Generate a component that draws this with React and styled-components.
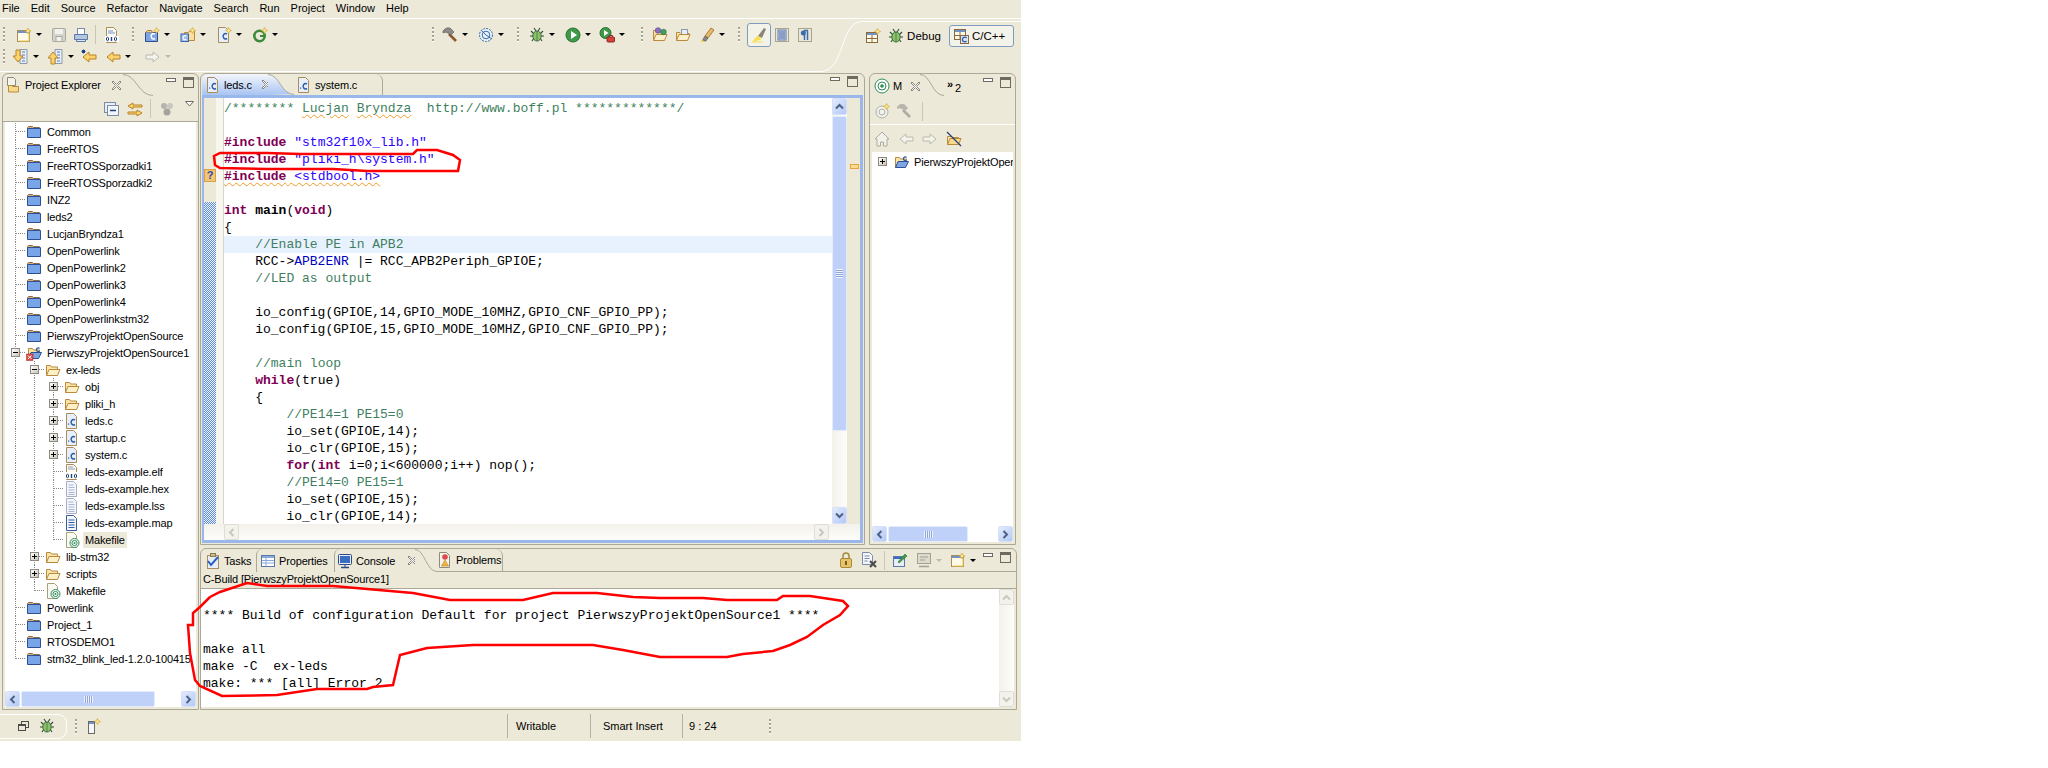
import React from "react";
import styled, { createGlobalStyle } from "styled-components";

const GlobalStyle = createGlobalStyle`
  html, body { margin: 0; background: #fff; }
  body { font-family: "Liberation Sans", Arial, sans-serif; font-size: 11px; color: #000; }
  * { box-sizing: border-box; }
`;

const BEIGE = "#ece9d8";
const LINE = "#aca899";

const Page = styled.div`
  position: relative;
  width: 1021px;
  height: 741px;
  background: ${BEIGE};
  display: flex;
  flex-direction: column;
  overflow: hidden;
`;

const MenuBar = styled.div`
  height: 19px;
  display: flex;
  gap: 11px;
  padding: 2px 0 0 2px;
  border-bottom: 1px solid #fff;
  font-size: 11px;
`;

const CoolBar = styled.div`
  position: relative;
  height: 53px;
  padding-top: 5px;
`;

const CoolCurve = styled.svg`
  position: absolute;
  left: 0;
  top: 0;
`;

const ToolRow = styled.div`
  position: relative;
  height: 22px;
  display: flex;
  align-items: center;
`;

const Tool = styled.div`
  flex: none;
  width: ${(p) => p.$w || 22}px;
  height: 22px;
  margin-left: ${(p) => p.$ml || 0}px;
  display: flex;
  align-items: center;
  justify-content: center;
`;

const CheckedTool = styled(Tool)`
  width: 24px;
  height: 24px;
  background: #f4f3ea;
  border: 1px solid #7e9cc0;
  border-radius: 3px;
`;

const DropBox = styled.div`
  flex: none;
  width: 14px;
  display: flex;
  padding-left: 1px;
  align-self: center;
`;

const Tri = styled.i`
  display: block;
  width: 0;
  height: 0;
  border-left: 3.5px solid transparent;
  border-right: 3.5px solid transparent;
  border-top: 3.5px solid ${(p) => (p.$off ? "#bdbbae" : "#000")};
`;

const Grip = styled.div`
  flex: none;
  width: 2px;
  height: 15px;
  margin-left: ${(p) => p.$ml || 0}px;
  margin-right: ${(p) => p.$mr || 0}px;
  background: repeating-linear-gradient(to bottom, #a5a294 0 2px, #fff 2px 3px, transparent 3px 4px);
`;

const Sep = styled.div`
  flex: none;
  width: 1px;
  height: 19px;
  align-self: center;
  margin-left: ${(p) => p.$ml || 0}px;
  margin-right: ${(p) => p.$mr || 0}px;
  background: #c9c6b4;
`;

const PerspLabel = styled.span`
  font-size: 11.5px;
  margin-left: 3px;
  white-space: nowrap;
`;

const PerspBox = styled.div`
  flex: none;
  width: 65px;
  height: 22px;
  margin: 3px 0 0 8px;
  display: flex;
  align-items: center;
  padding-left: 3px;
  background: #f4f3ea;
  border: 1px solid #7e9cc0;
  border-radius: 3px;
  font-size: 12px;
`;

const PerspPlain = styled.div`
  flex: none;
  display: flex;
  align-items: center;
  margin: 3px 0 0 ${(p) => p.$ml || 0}px;
`;

const Workbench = styled.div`
  display: flex;
  gap: 1px;
  height: 637px;
  margin-top: 2px;
  padding-left: 2px;
`;

const LeftPanel = styled.div`
  flex: none;
  width: 197px;
  display: flex;
  flex-direction: column;
  border: 1px solid ${LINE};
  border-radius: 6px 6px 0 0;
`;

const RightCol = styled.div`
  flex: none;
  width: 817px;
  display: flex;
  flex-direction: column;
  gap: 3px;
`;

const TopRow = styled.div`
  display: flex;
  gap: 4px;
  height: 472px;
`;

const EditorPanel = styled.div`
  flex: none;
  width: 665px;
  display: flex;
  flex-direction: column;
  border: 1px solid ${LINE};
  border-radius: 6px 6px 0 0;
  padding: 0 1px 1px 1px;
`;

const OutlinePanel = styled.div`
  flex: none;
  width: 147px;
  display: flex;
  flex-direction: column;
  border: 1px solid ${LINE};
  border-radius: 6px 6px 0 0;
`;

const ConsolePanel = styled.div`
  height: 162px;
  display: flex;
  flex-direction: column;
  border: 1px solid ${LINE};
  border-radius: 6px 6px 0 0;
`;

const TabStrip = styled.div`
  flex: none;
  height: ${(p) => p.$h || 23}px;
  display: flex;
  align-items: stretch;
  border-bottom: ${(p) => (p.$blue ? "3px solid #9ab7ec" : "0")};
`;

const TabRest = styled.div`
  flex: 1;
  min-width: 0;
  display: flex;
  align-items: stretch;
  border-bottom: 1px solid ${LINE};
`;

const Tab = styled.div`
  flex: none;
  display: flex;
  align-items: center;
  gap: 3px;
  width: ${(p) => p.$w}px;
  padding-left: ${(p) => p.$pl || 0}px;
  font-size: 11px;
  letter-spacing: -0.15px;
  white-space: nowrap;
  background: ${(p) => (p.$blue ? "linear-gradient(to bottom, #f4f6fb, #a8c4f2)" : "transparent")};
  border-left: ${(p) => (p.$left ? `1px solid ${LINE}` : "0")};
  border-right: ${(p) => (p.$edge ? `1px solid ${LINE}` : "0")};
  border-radius: ${(p) => (p.$edge ? "0 7px 0 0" : "6px 0 0 0")};
`;

const CloseMark = styled.span`
  flex: none;
  margin-left: ${(p) => p.$ml || 6}px;
  display: flex;
`;

const CurveBox = styled.svg`
  flex: none;
  display: block;
`;

const Fill = styled.div`
  flex: 1;
`;

const MinMax = styled.div`
  flex: none;
  display: flex;
  gap: 7px;
  align-items: flex-start;
  padding: ${(p) => p.$t || 3}px ${(p) => p.$r || 4}px 0 0;
`;

const MinBtn = styled.i`
  display: block;
  width: 10px;
  height: 4px;
  margin-top: 1px;
  background: #fff;
  border: 1px solid #6d6b5f;
`;

const MaxBtn = styled.i`
  display: block;
  width: 11px;
  height: 11px;
  background: linear-gradient(#6d6b5f 0 2px, ${BEIGE} 2px);
  border: 1px solid #6d6b5f;
`;

const ViewBar = styled.div`
  flex: none;
  height: ${(p) => p.$h || 26}px;
  display: flex;
  align-items: center;
  padding-left: ${(p) => p.$pl || 0}px;
  border-bottom: ${(p) => (p.$line ? `1px solid ${p.$line}` : "0")};
`;

const ViewMenu = styled.svg`
  margin-bottom: 10px;
`;

const TreeWrap = styled.div`
  flex: 1;
  min-height: 0;
  margin: 0 2px 2px 2px;
  background: #fff;
  display: flex;
  flex-direction: column;
`;

const Tree = styled.div`
  flex: 1;
  padding: 1px 0 0 1px;
  overflow: hidden;
`;

const TreeRow = styled.div`
  height: 17px;
  display: flex;
  align-items: center;
  white-space: nowrap;
  font-size: 11px;
  letter-spacing: -0.15px;
`;

const Cell = styled.div`
  position: relative;
  flex: none;
  width: 19px;
  height: 17px;

  &::before {
    content: "";
    display: ${(p) => (p.$kind === "none" ? "none" : "block")};
    position: absolute;
    left: 9px;
    top: 0;
    height: ${(p) => (p.$kind === "last" ? 9 : 17)}px;
    border-left: 1px dotted #8c8a80;
  }

  &::after {
    content: "";
    display: ${(p) => (p.$kind === "none" || p.$kind === "line" ? "none" : "block")};
    position: absolute;
    left: 10px;
    top: 8px;
    width: 9px;
    border-top: 1px dotted #8c8a80;
  }
`;

const Expander = styled.i`
  position: absolute;
  z-index: 1;
  left: 5px;
  top: 4px;
  width: 9px;
  height: 9px;
  background: linear-gradient(135deg, #fff, #c9c6b8);
  border: 1px solid #8c8a80;

  &::before {
    content: "";
    position: absolute;
    left: 1px;
    top: 3px;
    width: 5px;
    height: 1px;
    background: #000;
  }

  &::after {
    content: "";
    display: ${(p) => (p.$open ? "none" : "block")};
    position: absolute;
    left: 3px;
    top: 1px;
    width: 1px;
    height: 5px;
    background: #000;
  }
`;

const TreeIcon = styled.span`
  flex: none;
  display: flex;
  margin: 0 ${(p) => (p.$sel ? 3 : 5)}px 0 1px;
`;

const TreeText = styled.span`
  padding: ${(p) => (p.$sel ? "2px 2px" : "0")};
  background: ${(p) => (p.$sel ? BEIGE : "transparent")};
`;

const EditorBody = styled.div`
  flex: 1;
  min-height: 0;
  display: flex;
  flex-direction: column;
  background: #fff;
  border-left: 2px solid #9ab7ec;
  border-right: 3px solid #9ab7ec;
  border-bottom: 3px solid #9ab7ec;
`;

const EditorMain = styled.div`
  flex: 1;
  min-height: 0;
  display: flex;
`;

const Gutter = styled.div`
  flex: none;
  width: 12px;
  display: flex;
  flex-direction: column;
  background: ${BEIGE};
`;

const GutterTop = styled.div`
  flex: none;
  height: 104px;
  padding-top: 71px;
`;

const QuickFix = styled.div`
  width: 12px;
  height: 13px;
  background: #f4c573;
  border: 1px solid #d9a04a;
  color: #2a4aa8;
  font-weight: bold;
  font-size: 11px;
  line-height: 11px;
  text-align: center;
`;

const Dither = styled.div`
  flex: 1;
  background: repeating-conic-gradient(#5c8ce0 0 25%, #eef3fc 0 50%) 0 0 / 2px 2px;
`;

const FoldCol = styled.div`
  flex: none;
  width: 8px;
  background: #f7f6ef;
  border-right: 1px solid #d8d6c8;
`;

const Code = styled.div`
  flex: 1;
  min-width: 0;
  padding-top: 2px;
  overflow: hidden;
  font-family: "Liberation Mono", "Courier New", monospace;
  font-size: 13px;
`;

const Line = styled.div`
  height: 17px;
  line-height: 17px;
  white-space: pre;
  background: ${(p) => (p.$hl ? "#e8f2fe" : "transparent")};
`;

const Kw = styled.b`
  color: #7f0055;
`;
const Str = styled.span`
  color: #2a00ff;
`;
const Com = styled.span`
  color: #3f7f5f;
`;
const Fld = styled.span`
  color: #0000c0;
`;
const Squig = styled.span`
  text-decoration: underline wavy #f59a23 1px;
  text-underline-offset: 2px;
`;

const Ruler = styled.div`
  flex: none;
  width: 13px;
  padding: 66px 0 0 3px;
  background: ${BEIGE};
`;

const RulerMark = styled.div`
  width: 9px;
  height: 5px;
  background: #fbdc8c;
  border: 1px solid #e8a33c;
`;

const VTrack = styled.div`
  flex: none;
  width: 15px;
  display: flex;
  flex-direction: column;
  background: linear-gradient(to right, #f3f1ea, #fdfdfb);
`;

const HTrack = styled.div`
  flex: none;
  height: 16px;
  display: flex;
  padding-left: ${(p) => p.$pl || 0}px;
  padding-right: ${(p) => p.$pr || 0}px;
  background: ${(p) => (p.$white ? "#fff" : "linear-gradient(to bottom, #f3f1ea, #fdfdfb)")};
`;

const ScrollBtn = styled.div`
  flex: none;
  width: ${(p) => p.$w || 15}px;
  height: ${(p) => p.$h || 16}px;
  display: flex;
  align-items: center;
  justify-content: center;
  border-radius: 2px;
  background: ${(p) => (p.$off ? "#f3f2ec" : "linear-gradient(135deg, #e3ebfd, #b4c9f7)")};
  border: 1px solid ${(p) => (p.$off ? "#dfded4" : "#d4e0f8")};
`;

const Thumb = styled.div`
  flex: ${(p) => (p.$w ? "none" : 1)};
  width: ${(p) => (p.$w ? `${p.$w}px` : "auto")};
  display: flex;
  align-items: center;
  justify-content: center;
  background: #bfd1f8;
  border: 1px solid #e4ecfc;
  border-radius: 2px;
  margin: ${(p) => (p.$v ? "1px 0" : "0 1px")};
`;

const GripLines = styled.i`
  display: block;
  width: ${(p) => (p.$v ? 7 : 9)}px;
  height: ${(p) => (p.$v ? 9 : 7)}px;
  background: ${(p) =>
    p.$v
      ? "repeating-linear-gradient(to bottom, #eef3fd 0 1px, #8fa7d8 1px 2px)"
      : "repeating-linear-gradient(to right, #eef3fd 0 1px, #8fa7d8 1px 2px)"};
`;

const Gap = styled.div`
  flex: ${(p) => (p.$w || p.$h ? "none" : 1)};
  width: ${(p) => p.$w || 0}px;
  height: ${(p) => p.$h || 0}px;
`;

const ConsoleHead = styled.div`
  flex: none;
  height: 17px;
  padding: 1px 0 0 2px;
  font-size: 11px;
  letter-spacing: -0.15px;
  white-space: nowrap;
  border-bottom: 1px solid ${LINE};
`;

const ConsoleBody = styled.div`
  flex: 1;
  min-height: 0;
  display: flex;
  margin: 0 2px 2px 0;
  background: #fff;
`;

const ConsoleText = styled(Code)`
  padding: 18px 0 0 2px;
`;

const StatusBar = styled.div`
  flex: none;
  height: 30px;
  display: flex;
  align-items: center;
  margin-top: 1px;
  font-size: 11px;
`;

const FastBox = styled.div`
  flex: none;
  width: 67px;
  height: 25px;
  display: flex;
  align-items: center;
  padding-left: 14px;
  border: 1px solid #fff;
  border-left: 0;
  border-radius: 0 9px 9px 0;
`;

const StatusCell = styled.div`
  flex: none;
  width: ${(p) => p.$w}px;
  height: 24px;
  line-height: 24px;
  padding-left: ${(p) => p.$pl || 8}px;
  border-left: 1px solid #b4b2a4;
  white-space: nowrap;
`;

const OverflowMark = styled.span`
  font-size: 11px;
  line-height: 11px;
  font-weight: bold;
  align-self: flex-start;
  margin-top: 5px;
`;

const OverflowCount = styled.span`
  font-size: 11px;
  margin: 8px 0 0 -1px;
  align-self: flex-start;
`;

const Annotation = styled.svg`
  position: absolute;
  left: 0;
  top: 0;
  pointer-events: none;
`;

const IconSvg = styled.svg`
  display: block;
  flex: none;
`;

const folderOpen = (
  <>
    <path d="M1.5 13.5V3.5h4l1 1.5h6v2" fill="#fbe4a8" stroke="#b98a3c" />
    <path d="M1.5 13.5 4 7.5h11l-2.5 6z" fill="#fdf0c8" stroke="#b98a3c" />
  </>
);
const sheet = (stroke, fill) => <path d="M2.5 .5h7l3 3v12h-10z" fill={fill} stroke={stroke} />;
const cArc = (color = "#2a5ea8") => (
  <path d="M11 7a2.6 2.6 0 1 0 0 4.5" fill="none" stroke={color} strokeWidth="1.5" />
);
const spark = (x, y) => (
  <path d={`M${x} ${y - 3}l1 2 2 1-2 1-1 2-1-2-2-1 2-1z`} fill="#fde68a" stroke="#c79a2a" strokeWidth=".6" />
);
const zero = (x) => <ellipse cx={x} cy="12" rx="1.1" ry="1.8" fill="none" stroke="#22407a" />;
const makeTarget = (
  <>
    {sheet("#a8a078", "#fbfaf2")}
    <circle cx="10.5" cy="11" r="4.5" fill="#fff" stroke="#2e8b57" />
    <circle cx="10.5" cy="11" r="2.6" fill="none" stroke="#2e8b57" />
    <circle cx="10.5" cy="11" r="1" fill="#2e8b57" />
  </>
);
const bug = (
  <>
    <path d="M2 4l3 3M1 9h3M3 14l2-3M14 4l-3 3M15 9h-3M13 14l-2-3M5 1l2 3M11 1L9 4" stroke="#2d4a34" strokeWidth="1.1" />
    <ellipse cx="8" cy="9" rx="4.2" ry="5" fill="#8cc267" stroke="#3d6b42" />
    <path d="M8 4v10" stroke="#3d6b42" strokeWidth=".7" />
  </>
);
const annoDoc = (
  <>
    <path d="M7 .5h7v14H7z" fill="#e8eef6" stroke="#8d99ad" />
    <path d="M9 3h3M9 6h3M9 9h3M9 12h3" stroke="#5b7fb8" />
  </>
);

const ICONS = {
  newWizard: (
    <>
      <rect x="1.5" y="3.5" width="12" height="11" fill="#fdfbe8" stroke="#a88c5c" />
      <rect x="2" y="4" width="11" height="2" fill="#6f93c9" />
      <path d="M13 6v8H3" fill="none" stroke="#f2c84b" />
      {spark(12, 4)}
    </>
  ),
  save: (
    <>
      <rect x="1.5" y="1.5" width="13" height="13" rx="1" fill="#d4d4cc" stroke="#a8a89e" />
      <rect x="4" y="2" width="8" height="5" fill="#f2f2ec" />
      <rect x="5" y="9.5" width="6" height="5" fill="#f2f2ec" stroke="#a8a89e" />
    </>
  ),
  print: (
    <>
      <rect x="4.5" y="1.5" width="7" height="6" fill="#fff" stroke="#7a8ca8" />
      <path d="M1.5 7.5h13v5h-13z" fill="#b4c6e0" stroke="#5a78a8" />
      <path d="M3.5 12.5h9v2h-9z" fill="#dce6f4" stroke="#5a78a8" />
    </>
  ),
  binary: (
    <>
      {sheet("#a88c5c", "#fbfbf4")}
      <path d="M4 4h5M4 6h7" stroke="#6f93c9" />
      <rect x="1" y="9" width="14" height="6" fill="#fff" />
      {zero(3.5)}
      <path d="M7.5 10v4" stroke="#22407a" strokeWidth="1.4" />
      {zero(11.5)}
    </>
  ),
  newCProj: (
    <>
      <path d="M1.5 5.5h12v9h-12z" fill="#7fa6e4" stroke="#2e4f92" />
      <path d="M1.5 5.5l2-2h4l1 2" fill="#f2cd83" stroke="#a8803c" />
      {cArc("#fff")}
      {spark(12.5, 3.5)}
    </>
  ),
  newSrc: (
    <>
      <path d="M4.5 13.5V5.5h4l1-1.5h5v9.5z" fill="#fbe0a0" stroke="#b98a3c" />
      <rect x="1" y="7" width="7.5" height="7.5" fill="#9cbcec" stroke="#3d62a8" />
      <path d="M6.3 9.2a2 2 0 1 0 0 3" fill="none" stroke="#fff" strokeWidth="1.1" />
      {spark(12.5, 3.5)}
    </>
  ),
  newClass: (
    <>
      {sheet("#a88c5c", "#e9effa")}
      {cArc()}
      {spark(12.5, 3.5)}
    </>
  ),
  newG: (
    <>
      <circle cx="7.5" cy="9" r="5.2" fill="none" stroke="#3a8a3a" strokeWidth="2.6" />
      <path d="M8 9h5" stroke="#3a8a3a" strokeWidth="2" />
      {spark(12.5, 3.5)}
    </>
  ),
  hammer: (
    <>
      <path d="M7 7l7 7" stroke="#8a5a32" strokeWidth="2.6" />
      <path d="M1 4c3-4 7-4 9-1l2 2-3 3-3-2C4 5 3 5 1 6z" fill="#8a8a86" stroke="#55554f" strokeWidth=".6" />
    </>
  ),
  target: (
    <>
      <circle cx="8" cy="8" r="6.5" fill="#e8f0fa" stroke="#3a6ca8" strokeDasharray="2 1" />
      <circle cx="8" cy="8" r="3.8" fill="none" stroke="#3a6ca8" />
      <path d="M8 8l6 4M3 3l5 5" stroke="#3a6ca8" />
    </>
  ),
  bug,
  run: (
    <>
      <circle cx="8" cy="8" r="7" fill="#3f9a48" stroke="#2a6e35" />
      <path d="M6 4l6 4-6 4z" fill="#fff" />
    </>
  ),
  runExt: (
    <>
      <circle cx="6.5" cy="6" r="5.5" fill="#3f9a48" stroke="#2a6e35" />
      <path d="M5 3l4.5 3L5 9z" fill="#fff" />
      <rect x="8" y="10" width="7.5" height="5" rx="1" fill="#d8403a" stroke="#8e2a26" />
      <path d="M10 10V8.5h3.5V10" fill="none" stroke="#8e2a26" />
    </>
  ),
  openType: (
    <>
      {folderOpen}
      <circle cx="6" cy="3.5" r="2.8" fill="#8a6cc0" stroke="#5a4690" strokeWidth=".6" />
      <circle cx="11.5" cy="5" r="2.8" fill="#3fa060" stroke="#2a6e42" strokeWidth=".6" />
    </>
  ),
  openFile: (
    <>
      <path d="M1.5 13.5V5.5H5l1 1h8v1" fill="#fbe4a8" stroke="#b98a3c" />
      <rect x="6.5" y="2.5" width="6" height="5" fill="#e8eef8" stroke="#8d99ad" />
      <path d="M1.5 13.5 4 7.5h11l-2.5 6z" fill="#fdf0c8" stroke="#b98a3c" />
    </>
  ),
  brush: (
    <>
      <path d="M6 9l6-8 3 2-6 8z" fill="#e8b868" stroke="#a8803c" />
      <path d="M6 9l3 2-2 3H3z" fill="#8a8680" stroke="#55554f" strokeWidth=".6" />
      <path d="M1 15l3-2 1 2z" fill="#f4e050" />
    </>
  ),
  highlight: (
    <>
      <path d="M7 9l6-8 2 1-4 9z" fill="#8a8678" />
      <path d="M1 15l5-6 5 2-2 2z" fill="#f4e050" />
      <path d="M1 15h11" stroke="#f4e050" />
    </>
  ),
  lines: (
    <>
      <rect x="1.5" y="1.5" width="13" height="13" fill="#e8e6da" stroke="#a8a48e" />
      <rect x="4" y="3" width="8" height="10" fill="#d6e2f4" stroke="#5a78a8" />
      <path d="M5 5h6M5 7h6M5 9h6M5 11h6" stroke="#3a5a98" />
    </>
  ),
  pilcrow: (
    <>
      <rect x="1.5" y="1.5" width="13" height="13" fill="#e8e6da" stroke="#a8a48e" />
      <path d="M7 3.5H11M7.5 13V3.5M10.5 13V3.5" stroke="#3a6ca8" strokeWidth="1.5" />
      <circle cx="6.3" cy="6" r="2.5" fill="#3a6ca8" />
    </>
  ),
  persp: (
    <>
      <rect x="1.5" y="4.5" width="11" height="10" fill="#fdfbe8" stroke="#8a6a3c" />
      <rect x="2" y="5" width="10" height="2" fill="#6f93c9" />
      <path d="M7 7v7M2 10.5h10" stroke="#8a6a3c" />
      {spark(12.5, 3.5)}
    </>
  ),
  perspC: (
    <>
      <rect x="1.5" y="1.5" width="11" height="10" fill="#fdfbe8" stroke="#8a6a3c" />
      <rect x="2" y="2" width="10" height="2" fill="#6f93c9" />
      <path d="M7 4v7M2 7.5h10" stroke="#8a6a3c" />
      <rect x="7.5" y="7.5" width="8" height="8" fill="#dce6f8" stroke="#8a6a3c" />
      <path d="M13.5 10a2.3 2.3 0 1 0 0 3" fill="none" stroke="#2a5ea8" strokeWidth="1.3" />
    </>
  ),
  nextAnn: (
    <>
      {annoDoc}
      <path d="M3 1h4v6h3l-5 6-5-6h3z" fill="#fbd36a" stroke="#b9822a" />
    </>
  ),
  prevAnn: (
    <>
      {annoDoc}
      <path d="M3 15h4V9h3L5 3 0 9h3z" fill="#fbd36a" stroke="#b9822a" />
    </>
  ),
  lastEdit: (
    <>
      <path d="M15 6H8V3L2 8l6 5v-3h7z" fill="#fbd36a" stroke="#b9822a" />
      <path d="M1 1l3 3M4 1L1 4M2.5 .5v4M.5 2.5h4" stroke="#22407a" />
    </>
  ),
  back: <path d="M15 6H8V3L2 8l6 5v-3h7z" fill="#fbd36a" stroke="#b9822a" />,
  forwardOff: <path d="M1 6h7V3l6 5-6 5v-3H1z" fill="#f4f3ec" stroke="#bdbbae" />,
  backOff: <path d="M15 6H8V3L2 8l6 5v-3h7z" fill="#f4f3ec" stroke="#bdbbae" />,
  explorer: (
    <>
      <path d="M1.5 .5h6l2 2v6h-8z" fill="#f4f3ec" stroke="#8d8a7a" />
      <path d="M2.5 8.5h3l1 1h6V15h-10z" fill="#f9d98c" stroke="#b98a3c" />
    </>
  ),
  project: (
    <>
      <path d="M1.5 3.5l1-1h4l1 1h6v1h-12z" fill="#d8b078" stroke="#8a6a4a" />
      <path d="M1.5 4.5h13v9h-13z" fill="#78a4e8" stroke="#2e4f92" />
    </>
  ),
  projectOpen: (
    <>
      <path d="M2.5 13.5V3.5h4l1 1.5h6v2" fill="#fbe4a8" stroke="#b98a3c" />
      <path d="M2.5 13.5 5 7.5h10.5l-3 6z" fill="#7fa6e4" stroke="#2e4f92" />
      <path d="M13.5 3.5a1.8 1.8 0 1 0 0 2.5" fill="none" stroke="#2a5ea8" strokeWidth="1.2" />
      <rect x=".5" y="9" width="6.5" height="6.5" fill="#e04a4a" stroke="#a02222" strokeWidth=".5" />
      <path d="M2 10.5l3.5 3.5M5.5 10.5 2 14" stroke="#fff" />
    </>
  ),
  projectOpenPlain: (
    <>
      <path d="M2.5 13.5V3.5h4l1 1.5h6v2" fill="#fbe4a8" stroke="#b98a3c" />
      <path d="M2.5 13.5 5 7.5h10.5l-3 6z" fill="#7fa6e4" stroke="#2e4f92" />
      <path d="M13.5 3.5a1.8 1.8 0 1 0 0 2.5" fill="none" stroke="#2a5ea8" strokeWidth="1.2" />
    </>
  ),
  folder: folderOpen,
  cfile: (
    <>
      {sheet("#a88c5c", "#e9effa")}
      <rect x="4" y="10.5" width="1.2" height="1.2" fill="#2a5ea8" />
      {cArc()}
    </>
  ),
  binfile: (
    <>
      {sheet("#a88c5c", "#fbfbf4")}
      <path d="M4 3h5M4 5h7" stroke="#8d99ad" />
      <rect x="1" y="8" width="14" height="7" fill="#fff" />
      {zero(3.5)}
      <path d="M7.5 10v4" stroke="#22407a" strokeWidth="1.4" />
      {zero(11.5)}
    </>
  ),
  textfile: (
    <>
      {sheet("#a8aec0", "#f4f6fb")}
      <path d="M4.5 4h5M4.5 6.5h6M4.5 9h6M4.5 11.5h6M4.5 13.5h6" stroke="#a8b8d4" />
    </>
  ),
  mapfile: (
    <>
      {sheet("#3a5a98", "#f4f6fb")}
      <path d="M4.5 5h6M4.5 7.5h6M4.5 10h6M4.5 12.5h6" stroke="#2a5ea8" strokeWidth="1.2" />
    </>
  ),
  make: makeTarget,
  collapse: (
    <>
      <rect x=".5" y="1.5" width="11" height="10" fill="#e8eef8" stroke="#7a8ca8" />
      <rect x="3.5" y="4.5" width="11" height="10" fill="#f0f4fb" stroke="#7a8ca8" />
      <path d="M6 9.5h6" stroke="#22407a" strokeWidth="1.5" />
    </>
  ),
  link: (
    <>
      <path d="M15 4H6V2L1 5l5 3V6h9z" fill="#fbd36a" stroke="#b9822a" />
      <path d="M1 11h9V9l5 3-5 3v-2H1z" fill="#fbd36a" stroke="#b9822a" />
    </>
  ),
  grayBalls: (
    <>
      <circle cx="5" cy="5" r="3" fill="#b4b4ac" />
      <circle cx="11" cy="5" r="3" fill="#c8c8c0" />
      <circle cx="8" cy="11" r="3.5" fill="#a4a49c" />
    </>
  ),
  target2: (
    <>
      <circle cx="8" cy="8" r="7" fill="#fff" stroke="#2e8b57" />
      <circle cx="8" cy="8" r="4" fill="none" stroke="#2e8b57" />
      <circle cx="8" cy="8" r="1.8" fill="#2e8b57" />
    </>
  ),
  targetOff: (
    <>
      <circle cx="8" cy="9" r="6" fill="#f2f2ea" stroke="#a8b4a8" />
      <circle cx="8" cy="9" r="3" fill="none" stroke="#a8b4a8" />
      {spark(12.5, 3.5)}
    </>
  ),
  hammerOff: (
    <>
      <path d="M7 7l7 7" stroke="#aeaca2" strokeWidth="2.6" />
      <path d="M1 4c3-4 7-4 9-1l2 2-3 3-3-2C4 5 3 5 1 6z" fill="#b8b6ac" />
    </>
  ),
  home: <path d="M8 1 1 8h2v7h3.5v-4h3v4H13V8h2z" fill="#f2f1e8" stroke="#aeaca2" />,
  noFolder: (
    <>
      <path d="M1.5 13.5V5.5h4l1 1h6v1" fill="#fbe4a8" stroke="#b98a3c" />
      <path d="M1.5 13.5 4 7.5h11l-2.5 6z" fill="#fbd98c" stroke="#b98a3c" />
      <path d="M1 1l14 14" stroke="#22407a" strokeWidth="1.2" />
    </>
  ),
  tasks: (
    <>
      <rect x="2.5" y="2.5" width="11" height="13" fill="#e8eef8" stroke="#a88c5c" />
      <rect x="5.5" y=".5" width="5" height="3" fill="#c8bc98" stroke="#8a7a50" />
      <path d="M3 8l3 4 7-8" fill="none" stroke="#2a60c0" strokeWidth="2" />
    </>
  ),
  props: (
    <>
      <rect x="1.5" y="2.5" width="13" height="11" fill="#fff" stroke="#5a78a8" />
      <rect x="2" y="3" width="12" height="2" fill="#8aa8d8" />
      <path d="M2 7.5h12M2 10h12M6 5v8" stroke="#8aa8d8" />
    </>
  ),
  consoleV: (
    <>
      <rect x="1.5" y="1.5" width="13" height="10" rx="1" fill="#e8eef8" stroke="#2a4a88" />
      <rect x="3" y="3" width="10" height="7" fill="#3a6cc0" />
      <path d="M4 14.5h8" stroke="#2a4a88" strokeWidth="1.5" />
      <path d="M8 11.5v3" stroke="#2a4a88" />
    </>
  ),
  problems: (
    <>
      {sheet("#8d8a7a", "#f4f3ec")}
      <circle cx="8" cy="5" r="2.8" fill="#e04a4a" />
      <path d="M8 8l3.5 6h-7z" fill="#f2b83c" stroke="#b9822a" strokeWidth=".6" />
    </>
  ),
  lock: (
    <>
      <path d="M5 7V4a3 3 0 0 1 6 0v3" fill="none" stroke="#a88a3c" strokeWidth="1.5" />
      <rect x="2.5" y="6.5" width="11" height="9" rx="1.5" fill="#e8c468" stroke="#a88a3c" />
      <rect x="7" y="9" width="2" height="4" fill="#7a5a20" />
    </>
  ),
  clearDoc: (
    <>
      <path d="M1.5 .5h7l3 3v9h-10z" fill="#f4f6fb" stroke="#7a8ca8" />
      <path d="M3.5 4h5M3.5 6.5h5M3.5 9h3" stroke="#7a8ca8" />
      <path d="M9 9l6 6M15 9l-6 6" stroke="#4a4a48" strokeWidth="2" />
    </>
  ),
  pin: (
    <>
      <rect x="1.5" y="4.5" width="11" height="10" fill="#e8eef8" stroke="#5a78a8" />
      <rect x="2" y="5" width="10" height="2" fill="#3a6cc0" />
      <path d="M6 10l7-8 2 2-8 7z" fill="#3fa04a" stroke="#2a6e35" strokeWidth=".6" />
    </>
  ),
  monitorOff: (
    <>
      <rect x="1.5" y="1.5" width="13" height="10" fill="#dcdacc" stroke="#a4a294" />
      <path d="M4 5h8M4 8h5" stroke="#a4a294" />
      <path d="M3 14.5h10" stroke="#a4a294" strokeWidth="1.5" />
    </>
  ),
  fastView: (
    <>
      <rect x="3.5" y="3.5" width="6" height="12" fill="#f4f6fb" stroke="#6a6a60" />
      <rect x="4" y="4" width="5" height="2" fill="#6f93c9" />
      {spark(12.5, 3.5)}
    </>
  ),
  restore: (
    <>
      <rect x="5.5" y="3.5" width="7" height="6" fill="#ece9d8" stroke="#4a4a48" />
      <rect x="2.5" y="6.5" width="7" height="6" fill="#ece9d8" stroke="#4a4a48" />
      <path d="M3 7.5h6" stroke="#4a4a48" />
    </>
  ),
};

const Ico = ({ n, s = 16 }) => (
  <IconSvg width={s} height={s} viewBox="0 0 16 16">
    {ICONS[n]}
  </IconSvg>
);

const Close = ({ ml }) => (
  <CloseMark $ml={ml}>
    <svg width="11" height="11" viewBox="0 0 11 11">
      <path d="M2 1 5.5 4.5 9 1l1 1-3.5 3.5L10 9l-1 1-3.5-3.5L2 10 1 9l3.5-3.5L1 2z" fill="#fff" stroke="#8a887c" />
    </svg>
  </CloseMark>
);

const Drop = ({ off }) => (
  <DropBox>
    <Tri $off={off} />
  </DropBox>
);

const Chevron = ({ dir, off }) => {
  const rot = { up: 0, right: 90, down: 180, left: 270 }[dir];
  return (
    <svg width="9" height="9" viewBox="0 0 9 9" style={{ transform: `rotate(${rot}deg)` }}>
      <path d="M1 6.5 4.5 3 8 6.5" fill="none" stroke={off ? "#c8c8be" : "#4d6185"} strokeWidth="2" />
    </svg>
  );
};

// the S shaped end of a selected tab
const TabCurve = ({ w = 32, h = 23, fill = BEIGE, id }) => (
  <CurveBox width={w} height={h} viewBox={`0 0 ${w} ${h}`}>
    {id && (
      <defs>
        <linearGradient id={id} x1="0" y1="0" x2="0" y2="1">
          <stop offset="0" stopColor="#f4f6fb" />
          <stop offset="1" stopColor="#a8c4f2" />
        </linearGradient>
      </defs>
    )}
    <path
      d={`M0 0C${w * 0.45} 0 ${w * 0.5} ${h - 1} ${w} ${h - 1}L0 ${h}z`}
      fill={id ? `url(#${id})` : fill}
    />
    <path d={`M0 .5C${w * 0.45} .5 ${w * 0.5} ${h - 0.5} ${w} ${h - 0.5}`} fill="none" stroke={LINE} />
  </CurveBox>
);

const MENUS = ["File", "Edit", "Source", "Refactor", "Navigate", "Search", "Run", "Project", "Window", "Help"];

const blueRows = (names) => names.map((t) => ({ t, icon: "project", cells: [{ k: "branch" }] }));

const TREE = [
  ...blueRows([
    "Common", "FreeRTOS", "FreeRTOSSporzadki1", "FreeRTOSSporzadki2", "INZ2", "leds2", "LucjanBryndza1",
    "OpenPowerlink", "OpenPowerlink2", "OpenPowerlink3", "OpenPowerlink4", "OpenPowerlinkstm32",
    "PierwszyProjektOpenSource",
  ]),
  { t: "PierwszyProjektOpenSource1", icon: "projectOpen", cells: [{ k: "branch", box: "open" }] },
  { t: "ex-leds", icon: "folder", cells: [{ k: "line" }, { k: "branch", box: "open" }] },
  { t: "obj", icon: "folder", cells: [{ k: "line" }, { k: "line" }, { k: "branch", box: "plus" }] },
  { t: "pliki_h", icon: "folder", cells: [{ k: "line" }, { k: "line" }, { k: "branch", box: "plus" }] },
  { t: "leds.c", icon: "cfile", cells: [{ k: "line" }, { k: "line" }, { k: "branch", box: "plus" }] },
  { t: "startup.c", icon: "cfile", cells: [{ k: "line" }, { k: "line" }, { k: "branch", box: "plus" }] },
  { t: "system.c", icon: "cfile", cells: [{ k: "line" }, { k: "line" }, { k: "branch", box: "plus" }] },
  { t: "leds-example.elf", icon: "binfile", cells: [{ k: "line" }, { k: "line" }, { k: "branch" }] },
  { t: "leds-example.hex", icon: "textfile", cells: [{ k: "line" }, { k: "line" }, { k: "branch" }] },
  { t: "leds-example.lss", icon: "textfile", cells: [{ k: "line" }, { k: "line" }, { k: "branch" }] },
  { t: "leds-example.map", icon: "mapfile", cells: [{ k: "line" }, { k: "line" }, { k: "branch" }] },
  { t: "Makefile", icon: "make", sel: true, cells: [{ k: "line" }, { k: "line" }, { k: "last" }] },
  { t: "lib-stm32", icon: "folder", cells: [{ k: "line" }, { k: "branch", box: "plus" }] },
  { t: "scripts", icon: "folder", cells: [{ k: "line" }, { k: "branch", box: "plus" }] },
  { t: "Makefile", icon: "make", cells: [{ k: "line" }, { k: "last" }] },
  ...blueRows(["Powerlink", "Project_1", "RTOSDEMO1"]),
  { t: "stm32_blink_led-1.2.0-100415", icon: "project", cells: [{ k: "last" }] },
];

const Row = ({ row }) => (
  <TreeRow>
    {row.cells.map((c, i) => (
      <Cell key={i} $kind={c.k}>
        {c.box && <Expander $open={c.box === "open"} />}
      </Cell>
    ))}
    <TreeIcon $sel={row.sel}>
      <Ico n={row.icon} />
    </TreeIcon>
    <TreeText $sel={row.sel}>{row.t}</TreeText>
  </TreeRow>
);

const Editor = () => (
  <Code>
    <Line>
      <Com>
        /******** <Squig>Lucjan</Squig> <Squig>Bryndza</Squig>  http://www.boff.pl *************/
      </Com>
    </Line>
    <Line />
    <Line>
      <Kw>#include</Kw> <Str>"stm32f10x_lib.h"</Str>
    </Line>
    <Line>
      <Kw>#include</Kw> <Str>"pliki_h\system.h"</Str>
    </Line>
    <Line>
      <Squig>
        <Kw>#include</Kw> <Str>&lt;stdbool.h&gt;</Str>
      </Squig>
    </Line>
    <Line />
    <Line>
      <Kw>int</Kw> <b>main</b>(<Kw>void</Kw>)
    </Line>
    <Line>{"{"}</Line>
    <Line $hl>
      {"    "}
      <Com>//Enable PE in APB2</Com>
    </Line>
    <Line>
      {"    RCC->"}
      <Fld>APB2ENR</Fld> |= RCC_APB2Periph_GPIOE;
    </Line>
    <Line>
      {"    "}
      <Com>//LED as output</Com>
    </Line>
    <Line />
    <Line>{"    io_config(GPIOE,14,GPIO_MODE_10MHZ,GPIO_CNF_GPIO_PP);"}</Line>
    <Line>{"    io_config(GPIOE,15,GPIO_MODE_10MHZ,GPIO_CNF_GPIO_PP);"}</Line>
    <Line />
    <Line>
      {"    "}
      <Com>//main loop</Com>
    </Line>
    <Line>
      {"    "}
      <Kw>while</Kw>(true)
    </Line>
    <Line>{"    {"}</Line>
    <Line>
      {"        "}
      <Com>//PE14=1 PE15=0</Com>
    </Line>
    <Line>{"        io_set(GPIOE,14);"}</Line>
    <Line>{"        io_clr(GPIOE,15);"}</Line>
    <Line>
      {"        "}
      <Kw>for</Kw>(<Kw>int</Kw> i=0;i&lt;600000;i++) nop();
    </Line>
    <Line>
      {"        "}
      <Com>//PE14=0 PE15=1</Com>
    </Line>
    <Line>{"        io_set(GPIOE,15);"}</Line>
    <Line>{"        io_clr(GPIOE,14);"}</Line>
  </Code>
);

export default function App() {
  return (
    <Page>
      <GlobalStyle />
      <MenuBar>
        {MENUS.map((m) => (
          <span key={m}>{m}</span>
        ))}
      </MenuBar>

      <CoolBar>
        <CoolCurve width="1021" height="54" viewBox="0 0 1021 54">
          <path d="M0 52.5H822C845 50 840 3 862 2.5H1021" fill="none" stroke="#fff" />
        </CoolCurve>
        <ToolRow>
          <Grip $ml={3} />
          <Tool $ml={8}><Ico n="newWizard" /></Tool>
          <Drop />
          <Tool $ml={-1}><Ico n="save" /></Tool>
          <Tool><Ico n="print" /></Tool>
          <Sep $ml={3} $mr={5} />
          <Tool><Ico n="binary" /></Tool>
          <Grip $ml={9} />
          <Tool $ml={7}><Ico n="newCProj" /></Tool>
          <Drop />
          <Tool><Ico n="newSrc" /></Tool>
          <Drop />
          <Tool><Ico n="newClass" /></Tool>
          <Drop />
          <Tool><Ico n="newG" /></Tool>
          <Drop />
          <Grip $ml={147} />
          <Tool $ml={5}><Ico n="hammer" /></Tool>
          <Drop />
          <Tool><Ico n="target" /></Tool>
          <Drop />
          <Grip $ml={6} />
          <Tool $ml={7}><Ico n="bug" /></Tool>
          <Drop />
          <Tool><Ico n="run" /></Tool>
          <Drop />
          <Tool $ml={-2}><Ico n="runExt" /></Tool>
          <Drop />
          <Grip $ml={9} />
          <Tool $ml={6}><Ico n="openType" /></Tool>
          <Tool $ml={1}><Ico n="openFile" /></Tool>
          <Tool $ml={2}><Ico n="brush" /></Tool>
          <Drop />
          <Grip $ml={6} />
          <CheckedTool $ml={7}><Ico n="highlight" /></CheckedTool>
          <Tool><Ico n="lines" /></Tool>
          <Tool $ml={1}><Ico n="pilcrow" /></Tool>
          <Gap />
          <PerspPlain $ml={0}>
            <Ico n="persp" />
          </PerspPlain>
          <PerspPlain $ml={7}>
            <Ico n="bug" />
            <PerspLabel>Debug</PerspLabel>
          </PerspPlain>
          <PerspBox>
            <Ico n="perspC" />
            <PerspLabel>C/C++</PerspLabel>
          </PerspBox>
          <Gap $w={7} />
        </ToolRow>
        <ToolRow>
          <Grip $ml={3} />
          <Tool $ml={5}><Ico n="nextAnn" /></Tool>
          <Drop />
          <Tool $ml={-1}><Ico n="prevAnn" /></Tool>
          <Drop />
          <Tool $ml={-3}><Ico n="lastEdit" /></Tool>
          <Tool $ml={2}><Ico n="back" /></Tool>
          <Drop />
          <Tool $ml={4}><Ico n="forwardOff" /></Tool>
          <Drop off />
        </ToolRow>
      </CoolBar>

      <Workbench>
        <LeftPanel>
          <TabStrip $h={22}>
            <Tab $w={120} $pl={3}>
              <Ico n="explorer" />
              <span>Project Explorer</span>
              <Close ml={7} />
            </Tab>
            <TabCurve w={30} h={22} />
            <Fill />
            <MinMax>
              <MinBtn />
              <MaxBtn />
            </MinMax>
          </TabStrip>
          <ViewBar $h={26} $pl={98} $line={LINE}>
            <Tool><Ico n="collapse" /></Tool>
            <Tool $ml={1}><Ico n="link" /></Tool>
            <Sep $ml={4} $mr={5} />
            <Tool><Ico n="grayBalls" /></Tool>
            <Tool>
              <ViewMenu width="9" height="6" viewBox="0 0 9 6">
                <path d="M.5 .5h8L4.5 5z" fill="#fff" stroke="#6d6b5f" />
              </ViewMenu>
            </Tool>
          </ViewBar>
          <TreeWrap>
            <Tree>
              {TREE.map((row, i) => (
                <Row key={i} row={row} />
              ))}
            </Tree>
            <HTrack $white>
              <ScrollBtn><Chevron dir="left" /></ScrollBtn>
              <Thumb $w={134}><GripLines /></Thumb>
              <Gap />
              <ScrollBtn><Chevron dir="right" /></ScrollBtn>
            </HTrack>
          </TreeWrap>
        </LeftPanel>

        <RightCol>
          <TopRow>
            <EditorPanel>
              <TabStrip $h={24} $blue>
                <Tab $w={66} $pl={3} $blue>
                  <Ico n="cfile" />
                  <span>leds.c</span>
                  <Close ml={6} />
                </Tab>
                <TabCurve w={26} h={21} id="edTab" />
                <Tab $w={89} $pl={2} $edge>
                  <Ico n="cfile" />
                  <span>system.c</span>
                </Tab>
                <Fill />
                <MinMax $t={2} $r={5}>
                  <MinBtn />
                  <MaxBtn />
                </MinMax>
              </TabStrip>
              <EditorBody>
                <EditorMain>
                  <Gutter>
                    <GutterTop><QuickFix>?</QuickFix></GutterTop>
                    <Dither />
                  </Gutter>
                  <FoldCol />
                  <Editor />
                  <VTrack>
                    <ScrollBtn $h={17}><Chevron dir="up" /></ScrollBtn>
                    <Thumb $v><GripLines $v /></Thumb>
                    <Gap $h={75} />
                    <ScrollBtn $h={17}><Chevron dir="down" /></ScrollBtn>
                  </VTrack>
                  <Ruler><RulerMark /></Ruler>
                </EditorMain>
                <HTrack $pl={20} $pr={31}>
                  <ScrollBtn $off><Chevron dir="left" off /></ScrollBtn>
                  <Gap />
                  <ScrollBtn $off><Chevron dir="right" off /></ScrollBtn>
                </HTrack>
              </EditorBody>
            </EditorPanel>

            <OutlinePanel>
              <TabStrip $h={24}>
                <Tab $w={50} $pl={4}>
                  <Ico n="target2" />
                  <span>M</span>
                  <Close ml={5} />
                </Tab>
                <TabCurve w={24} h={22} />
                <Tab $w={30} $pl={3}>
                  <OverflowMark>»</OverflowMark>
                  <OverflowCount>2</OverflowCount>
                </Tab>
                <Fill />
                <MinMax>
                  <MinBtn />
                  <MaxBtn />
                </MinMax>
              </TabStrip>
              <ViewBar $h={27} $pl={1} $line="#fff">
                <Tool><Ico n="targetOff" /></Tool>
                <Tool><Ico n="hammerOff" /></Tool>
                <Sep $ml={7} />
              </ViewBar>
              <ViewBar $h={27} $pl={1}>
                <Tool><Ico n="home" /></Tool>
                <Tool $ml={2}><Ico n="backOff" /></Tool>
                <Tool $ml={2}><Ico n="forwardOff" /></Tool>
                <Tool $ml={2}><Ico n="noFolder" /></Tool>
              </ViewBar>
              <TreeWrap>
                <Tree>
                  <TreeRow>
                    <Cell $kind="none"><Expander /></Cell>
                    <TreeIcon><Ico n="projectOpenPlain" /></TreeIcon>
                    <span>PierwszyProjektOpen</span>
                  </TreeRow>
                </Tree>
                <HTrack $white>
                  <ScrollBtn><Chevron dir="left" /></ScrollBtn>
                  <Thumb $w={80}><GripLines /></Thumb>
                  <Gap />
                  <ScrollBtn><Chevron dir="right" /></ScrollBtn>
                </HTrack>
              </TreeWrap>
            </OutlinePanel>
          </TopRow>

          <ConsolePanel>
            <TabStrip $h={23}>
              <Tab $w={55} $pl={4}>
                <Ico n="tasks" />
                <span>Tasks</span>
              </Tab>
              <Tab $w={78} $pl={3} $left>
                <Ico n="props" />
                <span>Properties</span>
              </Tab>
              <Tab $w={81} $pl={2} $left>
                <Ico n="consoleV" />
                <span>Console</span>
                <Close ml={9} />
              </Tab>
              <TabCurve w={22} h={23} />
              <TabRest>
                <Tab $w={66} $edge>
                  <Ico n="problems" />
                  <span>Problems</span>
                </Tab>
                <Fill />
                <Tool><Ico n="lock" /></Tool>
                <Tool $ml={1}><Ico n="clearDoc" /></Tool>
                <Sep $ml={4} $mr={4} />
                <Tool><Ico n="pin" /></Tool>
                <Tool $ml={2}><Ico n="monitorOff" /></Tool>
                <Drop off />
                <Tool $ml={-2}><Ico n="newWizard" /></Tool>
                <Drop />
                <MinMax $t={3} $r={5}>
                  <MinBtn />
                  <MaxBtn />
                </MinMax>
              </TabRest>
            </TabStrip>
            <ConsoleHead>C-Build [PierwszyProjektOpenSource1]</ConsoleHead>
            <ConsoleBody>
              <ConsoleText>
                <Line>{"**** Build of configuration Default for project PierwszyProjektOpenSource1 ****"}</Line>
                <Line />
                <Line>make all</Line>
                <Line>{"make -C  ex-leds"}</Line>
                <Line>{"make: *** [all] Error 2"}</Line>
              </ConsoleText>
              <VTrack>
                <ScrollBtn $off $h={16}><Chevron dir="up" off /></ScrollBtn>
                <Gap />
                <ScrollBtn $off $h={16}><Chevron dir="down" off /></ScrollBtn>
              </VTrack>
            </ConsoleBody>
          </ConsolePanel>
        </RightCol>
      </Workbench>

      <StatusBar>
        <FastBox>
          <Tool $w={20}><Ico n="restore" /></Tool>
          <Tool $w={20} $ml={3}><Ico n="bug" /></Tool>
        </FastBox>
        <Grip $ml={8} />
        <Tool $ml={5}><Ico n="fastView" /></Tool>
        <Gap $w={403} />
        <StatusCell $w={83}>Writable</StatusCell>
        <StatusCell $w={92} $pl={12}>Smart Insert</StatusCell>
        <StatusCell $w={87} $pl={6}>9 : 24</StatusCell>
        <Grip />
      </StatusBar>

      <Annotation width="1021" height="741" viewBox="0 0 1021 741">
        <path
          d="M214 156 220 153H267L300 154H413L417 150H437L453 155L460 160L458 171H367L333 169H267L220 168L215 165Z"
          fill="none"
          stroke="#f00"
          strokeWidth="2.5"
        />
        <path
          d="M210 597 200 607 193 613 193 625 188 625 190 653 195 680 200 686 222 696 277 695 317 689 367 689 373 687 393 685 400 655 427 648 473 645 593 645 623 650 660 657 727 657 743 654 773 651 790 645 807 637 823 625 840 615 848 606 843 601 810 596 783 596 777 600 727 600 703 598 660 598 633 597 597 593 553 593 523 600 450 600 413 593 333 586 267 586 247 583 220 592 210 597"
          fill="none"
          stroke="#f00"
          strokeWidth="2.5"
        />
      </Annotation>
    </Page>
  );
}
